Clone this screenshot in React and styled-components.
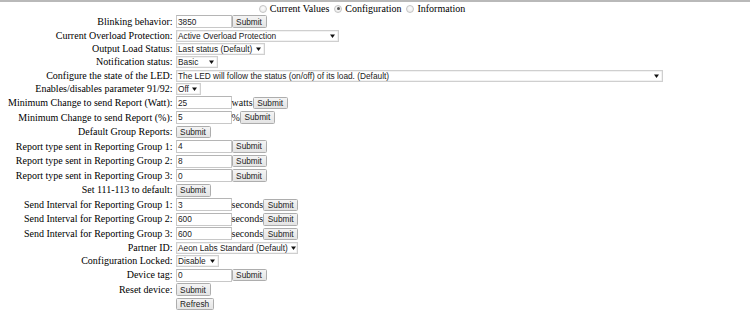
import React from "react";
import styled, { createGlobalStyle } from "styled-components";

const Global = createGlobalStyle`
  html, body { margin: 0; padding: 0; background: #fff; }
  body { font-family: "Liberation Serif", "Times New Roman", serif; font-size: 10px; color: #000; }
`;

const Page = styled.div`
  width: 750px;
  min-height: 331px;
  border-top: 2px solid #b9b9b9;
  box-sizing: border-box;
  padding-top: 1px;
`;

const RadioBar = styled.div`
  width: 724px;
  height: 11.45px;
  display: flex;
  align-items: center;
  justify-content: center;
  font-size: 10px;
  line-height: 1;
`;

const RadioItem = styled.label`
  display: inline-flex;
  align-items: center;
  margin-left: ${(p) => (p.$first ? 0 : 5)}px;
`;

const RadioDot = styled.span`
  width: 6px;
  height: 6px;
  border-radius: 50%;
  border: 1px solid #c4c4c4;
  background: radial-gradient(circle at 50% 40%, #fdfdfd, #e6e6e6);
  margin-right: 3px;
  display: inline-flex;
  align-items: center;
  justify-content: center;
  box-sizing: content-box;
  &::after {
    content: "";
    width: 3px;
    height: 3px;
    border-radius: 50%;
    background: ${(p) => (p.$checked ? "#555" : "transparent")};
  }
`;

const Form = styled.div`
  display: flex;
  flex-direction: column;
`;

const Row = styled.div`
  display: flex;
  align-items: center;
  height: ${(p) => p.$h}px;
`;

const Label = styled.div`
  width: 172.5px;
  text-align: right;
  white-space: nowrap;
  line-height: 1;
`;

const Field = styled.div`
  margin-left: 3px;
  display: flex;
  align-items: center;
  white-space: nowrap;
  line-height: 1;
`;

const controlFont = `
  font-family: "Liberation Sans", Arial, sans-serif;
  font-size: 8.3px;
  color: #222;
`;

const TextInput = styled.div`
  ${controlFont}
  box-sizing: border-box;
  width: 56px;
  height: 13px;
  border: 1px solid #c8c8c8;
  border-top-color: #b5b5b5;
  background: #fff;
  padding-left: 1.5px;
  display: flex;
  align-items: center;
`;

const Unit = styled.span`
  font-size: 10px;
  color: #111;
`;

const Button = styled.button`
  ${controlFont}
  box-sizing: border-box;
  height: 12.5px;
  padding: 0 3.6px;
  margin: 0;
  border: 1px solid #adadad;
  border-radius: 1.5px;
  background: linear-gradient(#f4f4f4, #e4e4e4);
  line-height: 1;
  display: inline-flex;
  align-items: center;
`;

const SelectBox = styled.div`
  ${controlFont}
  box-sizing: border-box;
  width: ${(p) => p.$w}px;
  height: 12px;
  border: 1px solid #cfcfcf;
  box-shadow: inset 0 0 0 0.5px #e6e6e6;
  background: #fff;
  padding: 0 3px 0 1.5px;
  display: flex;
  align-items: center;
  justify-content: space-between;
  gap: 3px;
`;

const Arrow = () => (
  <svg width="5" height="4" viewBox="0 0 5 4" style={{ flex: "none" }}>
    <path d="M0 0.5 H5 L2.5 4 Z" fill="#111" />
  </svg>
);

const S = 13.35;
const I = 14.55;

const rows = [
  { label: "Blinking behavior:", input: "3850", submit: true },
  { label: "Current Overload Protection:", select: "Active Overload Protection", w: 163 },
  { label: "Output Load Status:", select: "Last status (Default)", w: 89 },
  { label: "Notification status:", select: "Basic", w: 42 },
  { label: "Configure the state of the LED:", select: "The LED will follow the status (on/off) of its load. (Default)", w: 487 },
  { label: "Enables/disables parameter 91/92:", select: "Off", w: 25 },
  { label: "Minimum Change to send Report (Watt):", input: "25", unit: "watts", submit: true },
  { label: "Minimum Change to send Report (%):", input: "5", unit: "%", submit: true },
  { label: "Default Group Reports:", submit: true },
  { label: "Report type sent in Reporting Group 1:", input: "4", submit: true },
  { label: "Report type sent in Reporting Group 2:", input: "8", submit: true },
  { label: "Report type sent in Reporting Group 3:", input: "0", submit: true },
  { label: "Set 111-113 to default:", submit: true },
  { label: "Send Interval for Reporting Group 1:", input: "3", unit: "seconds", submit: true },
  { label: "Send Interval for Reporting Group 2:", input: "600", unit: "seconds", submit: true },
  { label: "Send Interval for Reporting Group 3:", input: "600", unit: "seconds", submit: true },
  { label: "Partner ID:", select: "Aeon Labs Standard (Default)", w: 122 },
  { label: "Configuration Locked:", select: "Disable", w: 43 },
  { label: "Device tag:", input: "0", submit: true },
  { label: "Reset device:", submit: true },
  { label: "", button: "Refresh" },
];

export default function App() {
  return (
    <Page>
      <Global />
      <RadioBar>
        <RadioItem $first>
          <RadioDot />
          Current Values
        </RadioItem>
        <RadioItem>
          <RadioDot $checked />
          Configuration
        </RadioItem>
        <RadioItem>
          <RadioDot />
          Information
        </RadioItem>
      </RadioBar>
      <Form>
        {rows.map((r, i) => (
          <Row key={i} $h={r.select ? S : I}>
            <Label>{r.label}</Label>
            <Field>
              {r.select && (
                <SelectBox $w={r.w}>
                  <span>{r.select}</span>
                  <Arrow />
                </SelectBox>
              )}
              {r.input !== undefined && <TextInput>{r.input}</TextInput>}
              {r.unit && <Unit>{r.unit}</Unit>}
              {r.submit && <Button>Submit</Button>}
              {r.button && <Button>{r.button}</Button>}
            </Field>
          </Row>
        ))}
      </Form>
    </Page>
  );
}
